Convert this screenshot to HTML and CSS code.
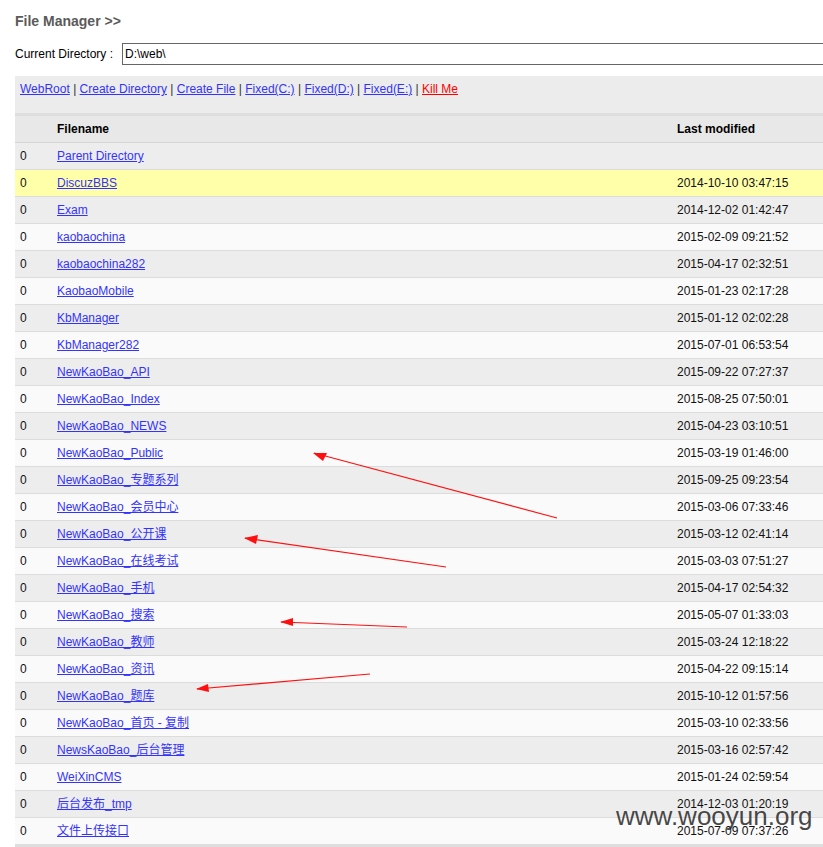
FILE: index.html
```html
<!DOCTYPE html>
<html>
<head>
<meta charset="utf-8">
<title>File Manager</title>
<link rel="stylesheet" href="styles.css">
</head>
<body>
<div class="page">
  <h1 class="title">File Manager &gt;&gt;</h1>
  <div class="dirbar">
    <span class="dirlabel">Current Directory :</span>
    <input class="dirinput" type="text" value="D:\web\">
  </div>
  <div class="toolbar">
    <a href="#">WebRoot</a> | <a href="#">Create Directory</a> | <a href="#">Create File</a> | <a href="#">Fixed(C:)</a> | <a href="#">Fixed(D:)</a> | <a href="#">Fixed(E:)</a> | <a href="#" class="kill">Kill Me</a>
  </div>
  <table class="files">
    <colgroup><col class="c1"><col class="c2"><col class="c3"></colgroup>
    <thead>
      <tr><th></th><th>Filename</th><th>Last modified</th></tr>
    </thead>
    <tbody>
      <tr><td>0</td><td><a href="#">Parent Directory</a></td><td></td></tr>
      <tr class="hl"><td>0</td><td><a href="#">DiscuzBBS</a></td><td>2014-10-10 03:47:15</td></tr>
      <tr><td>0</td><td><a href="#">Exam</a></td><td>2014-12-02 01:42:47</td></tr>
      <tr><td>0</td><td><a href="#">kaobaochina</a></td><td>2015-02-09 09:21:52</td></tr>
      <tr><td>0</td><td><a href="#">kaobaochina282</a></td><td>2015-04-17 02:32:51</td></tr>
      <tr><td>0</td><td><a href="#">KaobaoMobile</a></td><td>2015-01-23 02:17:28</td></tr>
      <tr><td>0</td><td><a href="#">KbManager</a></td><td>2015-01-12 02:02:28</td></tr>
      <tr><td>0</td><td><a href="#">KbManager282</a></td><td>2015-07-01 06:53:54</td></tr>
      <tr><td>0</td><td><a href="#">NewKaoBao_API</a></td><td>2015-09-22 07:27:37</td></tr>
      <tr><td>0</td><td><a href="#">NewKaoBao_Index</a></td><td>2015-08-25 07:50:01</td></tr>
      <tr><td>0</td><td><a href="#">NewKaoBao_NEWS</a></td><td>2015-04-23 03:10:51</td></tr>
      <tr><td>0</td><td><a href="#">NewKaoBao_Public</a></td><td>2015-03-19 01:46:00</td></tr>
      <tr><td>0</td><td><a href="#">NewKaoBao_专题系列</a></td><td>2015-09-25 09:23:54</td></tr>
      <tr><td>0</td><td><a href="#">NewKaoBao_会员中心</a></td><td>2015-03-06 07:33:46</td></tr>
      <tr><td>0</td><td><a href="#">NewKaoBao_公开课</a></td><td>2015-03-12 02:41:14</td></tr>
      <tr><td>0</td><td><a href="#">NewKaoBao_在线考试</a></td><td>2015-03-03 07:51:27</td></tr>
      <tr><td>0</td><td><a href="#">NewKaoBao_手机</a></td><td>2015-04-17 02:54:32</td></tr>
      <tr><td>0</td><td><a href="#">NewKaoBao_搜索</a></td><td>2015-05-07 01:33:03</td></tr>
      <tr><td>0</td><td><a href="#">NewKaoBao_教师</a></td><td>2015-03-24 12:18:22</td></tr>
      <tr><td>0</td><td><a href="#">NewKaoBao_资讯</a></td><td>2015-04-22 09:15:14</td></tr>
      <tr><td>0</td><td><a href="#">NewKaoBao_题库</a></td><td>2015-10-12 01:57:56</td></tr>
      <tr><td>0</td><td><a href="#">NewKaoBao_首页 - 复制</a></td><td>2015-03-10 02:33:56</td></tr>
      <tr><td>0</td><td><a href="#">NewsKaoBao_后台管理</a></td><td>2015-03-16 02:57:42</td></tr>
      <tr><td>0</td><td><a href="#">WeiXinCMS</a></td><td>2015-01-24 02:59:54</td></tr>
      <tr><td>0</td><td><a href="#">后台发布_tmp</a></td><td>2014-12-03 01:20:19</td></tr>
      <tr><td>0</td><td><a href="#">文件上传接口</a></td><td>2015-07-09 07:37:26</td></tr>
    </tbody>
  </table>
</div>
<svg class="arrows" width="823" height="847" viewBox="0 0 823 847">
  <g stroke="#ff1010" stroke-width="1.2" fill="none">
    <line x1="557" y1="518" x2="314" y2="453"/>
    <line x1="446" y1="567" x2="245" y2="538"/>
    <line x1="407" y1="627" x2="281" y2="622"/>
    <line x1="370" y1="674" x2="197" y2="689"/>
  </g>
  <g fill="#ff1010">
    <polygon points="313,453 327,453 323,461"/>
    <polygon points="244,538 258,535 256,544"/>
    <polygon points="280,622 293,618 293,626"/>
    <polygon points="196,689 208,684 209,692"/>
  </g>
</svg>
<div class="watermark">www.wooyun.org</div>
</body>
</html>
```
FILE: styles.css
```css
html, body {
  margin: 0;
  padding: 0;
  background: #fff;
}
body {
  font-family: "Liberation Sans", Arial, "Noto Sans CJK SC", sans-serif;
  font-size: 12px;
  color: #000;
  overflow: hidden;
}
.page {
  padding-left: 15px;
}
.title {
  margin: 0;
  padding-top: 13px;
  height: 30px;
  font-size: 14px;
  font-weight: bold;
  color: #5a5a5a;
  line-height: 17px;
  box-sizing: border-box;
}
.dirbar {
  display: flex;
  align-items: center;
  height: 23px;
  margin-top: 12px;
}
.dirlabel {
  width: 107px;
}
.dirinput {
  flex: 1;
  height: 22px;
  box-sizing: border-box;
  border: 1px solid #666;
  border-right: none;
  padding: 0 2px;
  font-family: inherit;
  font-size: 12px;
  color: #000;
  margin: 0;
  outline: none;
}
.toolbar {
  margin-top: 11px;
  background: #ececec;
  height: 37px;
  padding: 6px 5px 0;
  box-sizing: border-box;
  color: #333;
  line-height: 14px;
}
.toolbar a {
  color: #3333ff;
}
.toolbar a.kill {
  color: #ff0000;
}
.files {
  width: 100%;
  border-collapse: collapse;
  table-layout: fixed;
  border-top: 3px solid #dedede;
}
.c1 { width: 42px; }
.c2 { width: 620px; }
.files th {
  background: #e8e8e8;
  height: 26px;
  text-align: left;
  font-weight: bold;
  color: #000;
  padding: 0;
  line-height: 14px;
  border-bottom: 1px solid #d6d6d6;
}
.files td {
  height: 26px;
  padding: 0;
  line-height: 14px;
  border-bottom: 1px solid #dcdcdc;
  color: #111;
  white-space: nowrap;
}
.files td a {
  line-height: 14px;
  display: inline-block;
  height: 14px;
}
.files td:first-child {
  padding-left: 5px;
}
.files tbody tr:nth-child(odd) td {
  background: #ededed;
}
.files tbody tr:nth-child(even) td {
  background: #fafafa;
}
.files tbody tr.hl td {
  background: #ffffaa;
}
.files tbody tr:last-child td {
  border-bottom: 3px solid #dedede;
}
.files a {
  color: #3333ff;
}
.arrows {
  position: absolute;
  left: 0;
  top: 0;
  pointer-events: none;
}
.watermark {
  position: absolute;
  left: 616px;
  top: 801px;
  font-family: "Liberation Sans", Arial, sans-serif;
  font-size: 26px;
  color: rgba(40, 40, 40, 0.85);
  pointer-events: none;
}
```
